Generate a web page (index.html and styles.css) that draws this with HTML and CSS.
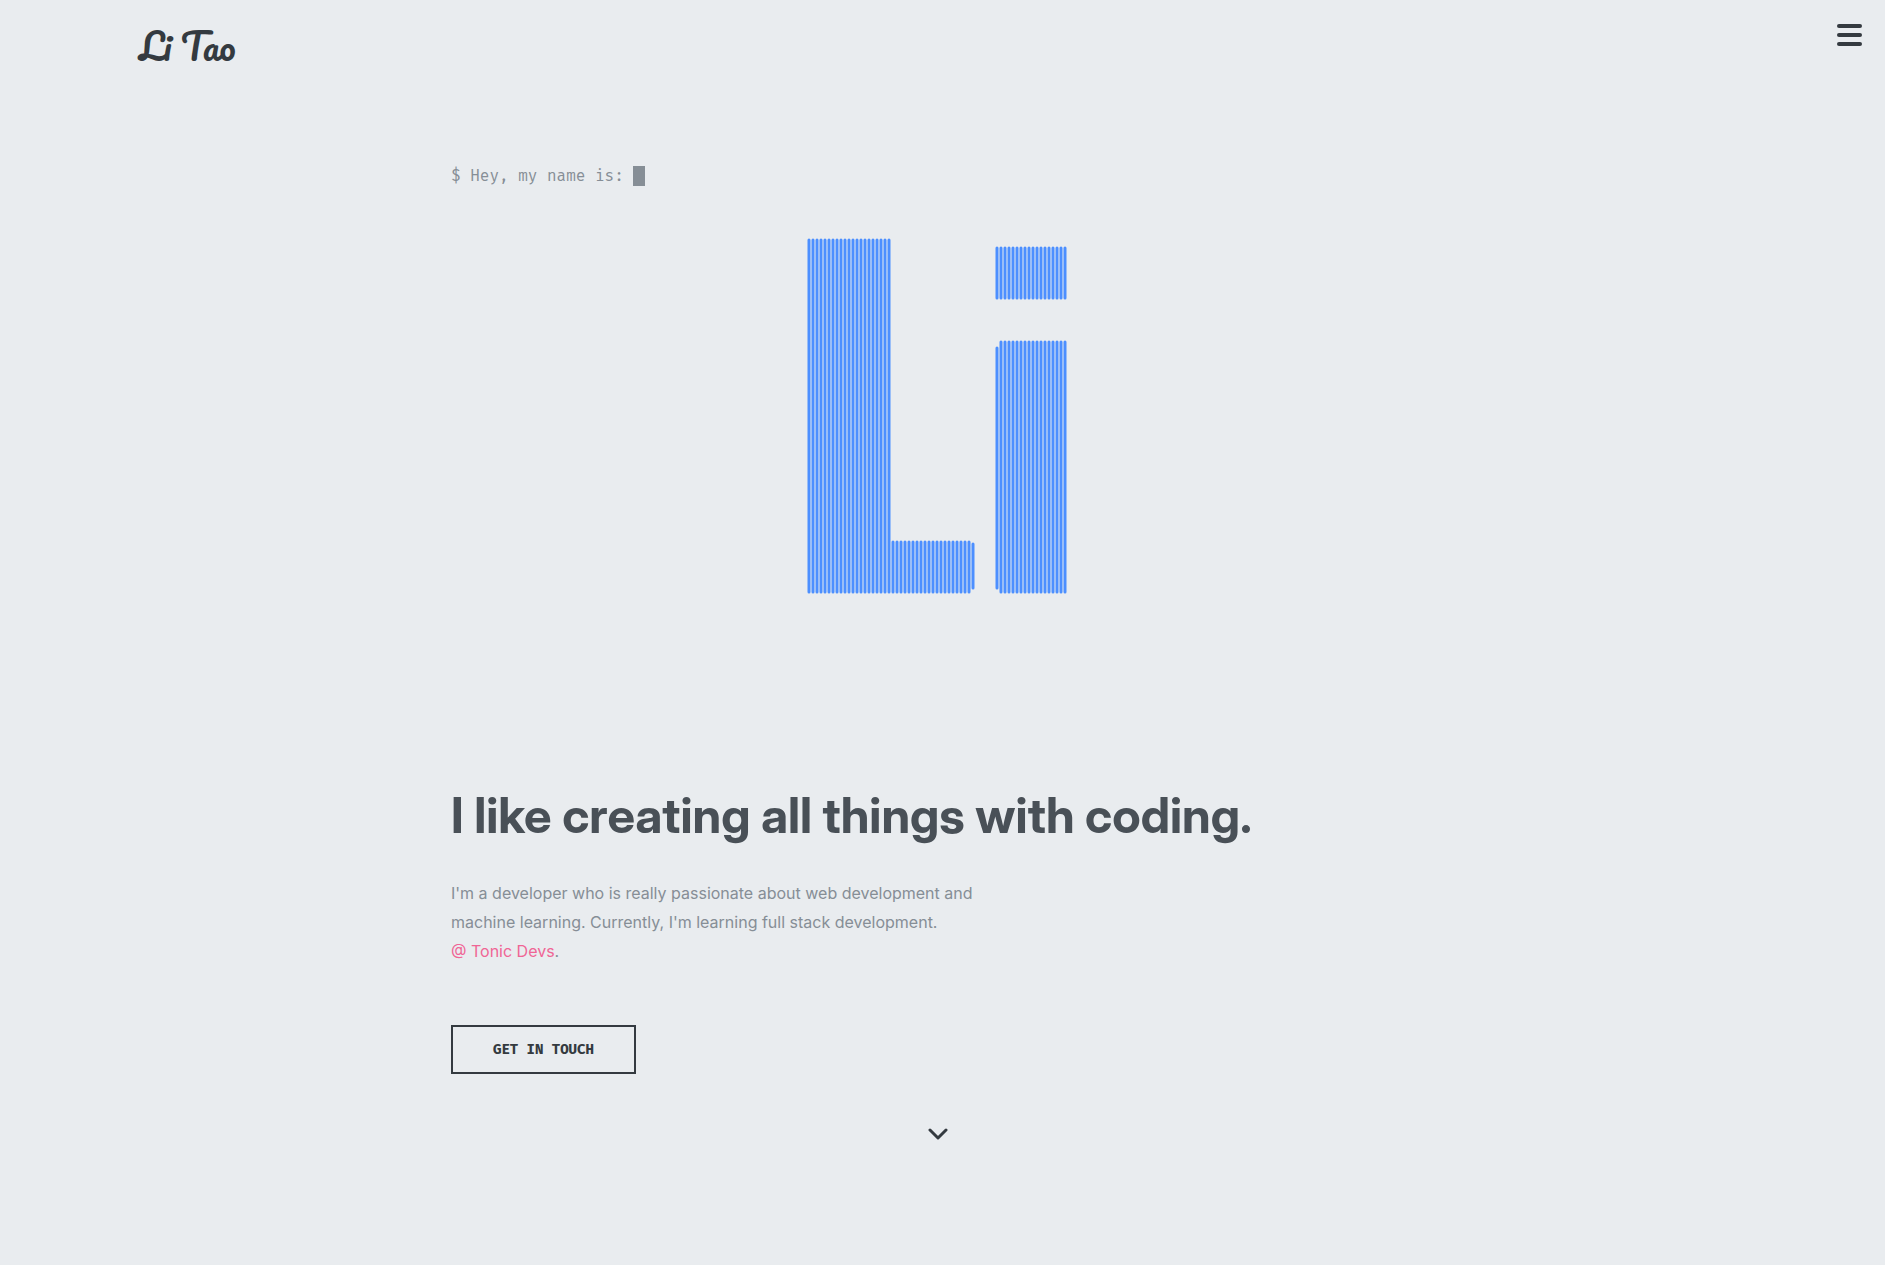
FILE: index.html
```html
<!DOCTYPE html>
<html lang="en">
<head>
  <meta charset="utf-8">
  <meta name="viewport" content="width=device-width, initial-scale=1">
  <title>Li Tao</title>
  <link rel="stylesheet" href="styles.css">
</head>
<body>
  <header class="header">
    <a class="logo" href="#home">Li Tao</a>
    <button class="menu" type="button" aria-label="Menu">
      <span class="menu-bar"></span>
      <span class="menu-bar"></span>
      <span class="menu-bar"></span>
    </button>
  </header>
  <main class="page" id="home">
    <section class="hero">
      <p class="prompt">$ Hey, my name is: <span class="cursor"></span></p>
      <svg class="bars" id="bars" viewBox="0 0 973 500" role="img" aria-label="Li"></svg>
      <h1 class="title">I like creating all things with coding.</h1>
      <p class="intro">I'm a developer who is really passionate about web development and machine learning. Currently, I'm learning full stack development. <br><a class="link" href="#tonic">@ Tonic Devs</a>.</p>
      <button class="contact" type="button">GET IN TOUCH</button>
      <a class="down" href="#about" aria-label="Scroll down">
        <svg width="20" height="12" viewBox="0 0 20 12"><path d="M2 2l8 8 8-8" fill="none" stroke="currentColor" stroke-width="3" stroke-linecap="round" stroke-linejoin="round"/></svg>
      </a>
    </section>
  </main>
  <script src="bars.js"></script>
</body>
</html>
```
FILE: styles.css
```css
* { box-sizing: border-box; }

body {
  margin: 0;
  min-height: 100vh;
  background: #e9ecef;
  color: #868e96;
  font-family: Inter, "Liberation Sans", sans-serif;
}

.header {
  display: flex;
  align-items: flex-start;
  justify-content: space-between;
  height: 120px;
  padding: 24px 23px 0 139px;
}

.logo {
  color: #343a40;
  font: 400 36px/44px Pacifico, Lato, cursive;
  text-decoration: none;
}

.menu {
  display: flex;
  flex-direction: column;
  gap: 5px;
  width: 25px;
  padding: 0;
  border: 0;
  background: none;
}

.menu-bar {
  width: 100%;
  height: 4px;
  border-radius: 2px;
  background: #343a40;
}

.page {
  padding: 40px 10px 40px 0;
}

.hero {
  display: flex;
  flex-direction: column;
  align-items: flex-start;
  max-width: 973px;
  margin: 0 auto;
}

.prompt {
  display: flex;
  align-items: center;
  height: 32px;
  margin: 0 0 22px;
  font: 16px/32px "Fira Mono", "DejaVu Sans Mono", monospace;
  white-space: pre;
}

.cursor {
  width: 12px;
  height: 20px;
  background: #868e96;
}

.bars {
  display: block;
  width: 100%;
  height: auto;
  stroke: #4c8fff;
  stroke-width: 3;
  stroke-linecap: round;
}

.title {
  margin: 72px 0 33px;
  color: #495057;
  font-family: "Inter Display", Inter, sans-serif;
  font-size: 49px;
  font-weight: 700;
  line-height: 60px;
}

.intro {
  max-width: 540px;
  margin: 0 0 59px;
  font-size: 16px;
  line-height: 29px;
}

.link {
  color: #f06595;
  text-decoration: none;
}

.contact {
  padding: 14px 40px;
  border: 2px solid #343a40;
  background: none;
  color: #343a40;
  font: 700 14px/17px "Fira Mono", "DejaVu Sans Mono", monospace;
}

.down {
  display: flex;
  align-self: center;
  margin-top: 54px;
  color: #343a40;
}
```
FILE: bars.js
```js
// Groups of vertical strokes: first x, number of strokes, top and bottom.
const groups = [
  [358, 21, 26, 378],
  [442, 20, 328, 378],
  [522, 1, 330, 374],
  [546, 18, 34, 84],
  [546, 1, 134, 374],
  [550, 17, 128, 378],
];
const svg = document.getElementById("bars");
for (const [x, count, top, bottom] of groups) {
  for (let i = 0; i < count; i++) {
    const line = document.createElementNS("http://www.w3.org/2000/svg", "line");
    line.setAttribute("x1", x + i * 4);
    line.setAttribute("x2", x + i * 4);
    line.setAttribute("y1", top);
    line.setAttribute("y2", bottom);
    svg.append(line);
  }
}
```
